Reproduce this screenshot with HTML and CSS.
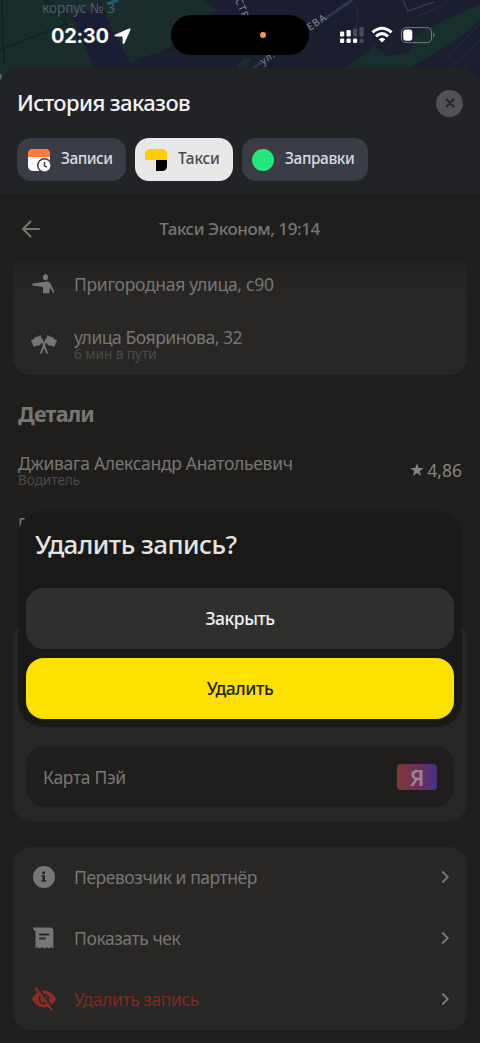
FILE: index.html
```html
<!DOCTYPE html>
<html lang="ru">
<head>
<meta charset="utf-8">
<meta name="viewport" content="width=device-width">
<title>История заказов</title>
<link rel="stylesheet" href="styles.css">
</head>
<body>
<div class="screen">
  <svg class="map" width="480" height="110" viewBox="0 0 480 110">
    <rect width="480" height="110" fill="#1a1e30"/>
    <path d="M0 0H48L56 12 72 17 95 68H128L100 0H204L216 10 186 35 162 52 176 68V90H0Z" fill="#182d2c"/>
    <path d="M48 0H100L84 14 72 17Z" fill="#182d2c"/>
    <path d="M72 17L100 5 130 64 150 56 165 53 178 70H95Z" fill="#1a1e35"/>
    <path d="M98 4L113 0 128 56 172 38 202 0H106Z" fill="#182d2c"/>
    <path d="M345 68L369 52 373 44 386 56 410 52 416 34 445 20 480 4V20L465 34 440 50 410 68Z" fill="#17302e"/>
    <path d="M236 68L244 56 251 60 246 68Z" fill="#17302e"/>
    <g fill="none" stroke="#111d22">
      <path d="M2 0L4 64M0 50L66 24M66 24L45 0M66 24L62 12M136 60L182 46M66 24L82 40"/>
    </g>
    <path d="M350 0C363 14 357 23 354 32M410 20L436 8 450 0M450 68L480 40M464 68L480 52M445 60L480 24" fill="none" stroke="#252c40"/>
    <path d="M403 0L408 11 434 2" fill="none" stroke="#393b36" stroke-width="1.5"/>
    <path d="M248 72L262 62M322 21L352 0" stroke="#2d3554" stroke-width="3"/>
    <path d="M107 4L118 0" stroke="#176079" stroke-width="3"/>
    <text class="map-label" x="42" y="13">корпус № 3</text>
    <text class="map-street" transform="translate(235 0) rotate(68)">СТР.</text>
    <text class="map-street" transform="translate(263 65) rotate(-34)">ул.</text>
    <text class="map-street" transform="translate(310 31) rotate(-35)">ЕВА</text>
    <text class="map-street" x="-4" y="80">ол</text>
  </svg>

  <header class="status">
    <div class="clock">02:30
      <svg width="17" height="17" viewBox="0 0 17 17"><path d="M1 6.800L15 .6Q17 .1 16.400 2L10.500 15.300Q9.300 17 8.600 15V9.200Q8.600 8.500 7.900 8.500H1.800Q-.6 8 1 6.800Z" fill="#fff"/></svg>
    </div>
    <div class="island"><i class="mic"></i></div>
    <svg class="indicators" width="98" height="18" viewBox="0 0 98 18">
      <g fill="#fff"><rect x="1" y="5.500" width="4.200" height="5" rx="1.300"/><rect x="7.500" y="4" width="4.200" height="6.500" rx="1.300"/><rect x="1" y="12.500" width="4.200" height="4.500" rx="1.300"/><rect x="7.500" y="12.500" width="4.200" height="4.500" rx="1.300"/><rect x="14" y="12.500" width="4.200" height="4.500" rx="1.300"/></g>
      <g fill="#494b57"><rect x="14" y="2.500" width="4.200" height="8" rx="1.300"/><rect x="20.500" y="1" width="4.200" height="9.500" rx="1.300"/><rect x="20.500" y="12.500" width="4.200" height="4.500" rx="1.300"/></g>
      <g fill="none" stroke="#fff" stroke-width="3"><path d="M33.500 6.400Q43 -2 52.500 6.400M37 10.300Q43 5 49 10.300"/></g>
      <path d="M43 16.500L39.700 13.300Q43 10.300 46.300 13.300Z" fill="#fff"/>
      <rect x="62.500" y="1.600" width="30" height="15" rx="4.500" fill="none" stroke="#787b83"/>
      <rect x="64.300" y="3.400" width="9" height="11.400" rx="2.800" fill="#fff"/>
      <path d="M94.200 6.500Q97 9 94.200 11.500Z" fill="#787b83"/>
    </svg>
  </header>

  <main class="sheet">
    <div class="top">
      <div class="heading">
        <h1>История заказов</h1>
        <span class="close"><svg width="12" height="12" viewBox="0 0 12 12"><path d="M2.500 2.500L9.500 9.500M9.500 2.500L2.500 9.500" stroke="#242528" stroke-width="2" stroke-linecap="round"/></svg></span>
      </div>
      <nav class="tabs">
        <div class="tab tab-records">
          <svg width="24" height="24" viewBox="0 0 24 24"><rect width="22" height="22" rx="5" fill="#fafafa"/><path d="M0 8V5Q0 0 5 0H17Q22 0 22 5V8Z" fill="#ff7a38"/><circle cx="16.500" cy="16.500" r="7.500" fill="#3a3d46"/><circle cx="16.500" cy="16.500" r="5.900" fill="#fafafa"/><path d="M16.500 13V16.900L19 18.200" fill="none" stroke="#3a3d46" stroke-width="1.500"/></svg>
          <span>Записи</span>
        </div>
        <div class="tab tab-taxi active">
          <svg width="24" height="24" viewBox="0 0 24 24"><path d="M0 11V6Q0 0 6 0H17Q22 0 22 5V11Z" fill="#fc0"/><path d="M11 11H22V17Q22 22 17 22H11Z" fill="#000"/></svg>
          <span>Такси</span>
        </div>
        <div class="tab tab-fuel">
          <svg width="24" height="24" viewBox="0 0 24 24"><circle cx="11" cy="11" r="11" fill="#25e67b"/></svg>
          <span>Заправки</span>
        </div>
      </nav>
    </div>

    <div class="titlebar">
      <svg class="back" width="20" height="18" viewBox="0 0 20 18"><path d="M8.500 1.500L1 9 8.500 16.500M1.200 9H17" fill="none" stroke="#777674" stroke-width="2" stroke-linecap="round" stroke-linejoin="round"/></svg>
      <span class="ride">Такси Эконом, 19:14</span>
    </div>

    <section class="card route">
      <div class="row">
        <span class="icon"><svg width="26" height="24" viewBox="0 0 26 24"><g fill="#777674"><ellipse cx="14.500" cy="5.300" rx="2.600" ry="3"/><path d="M1.500 11.400L16 9.600Q18.500 9.600 19.700 12L23.500 20 22.200 20.800 19 15.500 18.400 21.200H12L12 15 2 13.500Q.6 12.400 1.500 11.400Z"/></g></svg></span>
        <span class="t-from">Пригородная улица, с90</span>
      </div>
      <div class="row">
        <span class="icon"><svg width="28" height="24" viewBox="0 0 28 24"><g fill="#777674"><path d="M1 7.500Q4 6.500 5.500 4Q8 4 10.500 2L13 9.500Q10.500 10 9.500 12.500Q6.500 12 3.700 14Z"/><path d="M27 7.500Q24 6.500 22.500 4Q20 4 17.500 2L15 9.500Q17.500 10 18.500 12.500Q21.500 12 24.300 14Z"/></g><path d="M11.500 6L17.300 20.500M16.500 6L10.700 20.500" stroke="#777674" stroke-width="1.900"/></svg></span>
        <span class="stack"><span class="t-to">улица Бояринова, 32</span><small class="t-time">6 мин в пути</small></span>
      </div>
    </section>

    <section class="details">
      <h2>Детали</h2>
      <div class="detail">
        <span class="stack"><span class="t-driver">Дживага Александр Анатольевич</span><small class="t-role">Водитель</small></span>
        <span class="rating"><svg width="14" height="14" viewBox="0 0 14 14"><path d="M7 .3L8.700 5H13.700L9.700 8.100 11.100 13 7 10.100 2.900 13 4.300 8.100 .3 5H5.300Z" fill="#858481"/></svg><span class="t-rate">4,86</span></span>
      </div>
      <div class="detail car">Г</div>
    </section>

    <section class="card payment">
      <div class="method"><span class="t-pay">Карта Пэй</span><span class="pay-logo">Я</span></div>
    </section>

    <section class="card menu">
      <div class="row">
        <span class="icon"><svg width="22" height="22" viewBox="0 0 22 22"><circle cx="11" cy="11" r="11" fill="#777674"/><circle cx="10.700" cy="6.700" r="1.500" fill="#252422"/><path d="M8.200 9.200H12V14.300H13.300V15.700H8.200V14.300H9.500V10.500H8.200Z" fill="#252422"/></svg></span>
        <span class="label t-carrier">Перевозчик и партнёр</span>
        <svg class="chevron" width="8" height="14" viewBox="0 0 8 14"><path d="M1.300 1.500L6.700 7 1.300 12.500" fill="none" stroke="#7b7a78" stroke-width="1.800"/></svg>
      </div>
      <div class="row">
        <span class="icon"><svg width="22" height="22" viewBox="0 0 22 22"><path d="M0 .5H17Q20.300 .5 20.300 4V21.500L18.300 20Q16 22.500 14 20Q11.500 22.500 9 20Q6.500 22.500 4.500 20L2.500 21.500V4Q0 3.500 0 .5Z" fill="#777674"/><path d="M7 7.500H15.500M7 11.500H12" stroke="#282725" stroke-width="1.900" stroke-linecap="round"/></svg></span>
        <span class="label t-check">Показать чек</span>
        <svg class="chevron" width="8" height="14" viewBox="0 0 8 14"><path d="M1.300 1.500L6.700 7 1.300 12.500" fill="none" stroke="#7b7a78" stroke-width="1.800"/></svg>
      </div>
      <div class="row danger">
        <span class="icon"><svg width="26" height="24" viewBox="0 0 26 24"><path d="M1 12C3 7 8 3.500 13 3.500S23 7 25 12C23 17 18 20.500 13 20.500S3 17 1 12Z" fill="#8b2c22"/><circle cx="13" cy="12" r="5.300" fill="#282725"/><circle cx="13" cy="12" r="3.600" fill="#8b2c22"/><path d="M6.800 0L22.500 22" stroke="#282725" stroke-width="1.800"/><path d="M5 1.500L20.500 22.500" stroke="#8b2c22" stroke-width="2.200" stroke-linecap="round"/></svg></span>
        <span class="label t-delete">Удалить запись</span>
        <svg class="chevron" width="8" height="14" viewBox="0 0 8 14"><path d="M1.300 1.500L6.700 7 1.300 12.500" fill="none" stroke="#7b7a78" stroke-width="1.800"/></svg>
      </div>
    </section>
  </main>

  <div class="dialog" role="dialog">
    <h3>Удалить запись?</h3>
    <button class="btn dismiss"><span>Закрыть</span></button>
    <button class="btn confirm"><span>Удалить</span></button>
  </div>
</div>
</body>
</html>
```
FILE: styles.css
```css
* { box-sizing: border-box; }
body { margin: 0; background: #1f1e1c; }
.screen { position: relative; width: 480px; height: 1043px; overflow: hidden; font-family: "Noto Sans", sans-serif; color: #777674; font-size: 17.5px; line-height: 22px; white-space: nowrap; }
h1, h2, h3 { margin: 0; }
svg { display: block; flex: none; }
.map { position: absolute; top: 0; left: 0; }
.map-label { fill: #555d62; font-size: 13.5px; }
.map-street { fill: #858b98; font-size: 10px; letter-spacing: 1px; }

.status { position: relative; height: 68px; display: flex; align-items: center; padding: 2px 43px 0 51px; }
.clock { width: 120px; display: flex; align-items: center; gap: 5px; padding-top: 2px; color: #fff; font: 700 20px/24px Inter, sans-serif; letter-spacing: -.3px; }
.island { width: 138px; height: 40px; border-radius: 20px; background: #000; display: flex; align-items: center; padding-left: 89px; }
.mic { width: 6px; height: 6px; border-radius: 50%; background: #f6963c; }
.indicators { margin-left: auto; }

.sheet { position: relative; height: 975px; border-radius: 18px 18px 0 0; overflow: hidden; background: #1f1e1c; }
.top { height: 126px; padding: 18px 17px 0 17px; background: #222327; }
.heading { height: 34px; display: flex; align-items: center; justify-content: space-between; }
h1 { padding-bottom: 2px; font-size: 22px; font-weight: 500; color: #f2f2f2; letter-spacing: -.6px; }
.close { width: 27px; height: 27px; border-radius: 50%; background: #515254; display: flex; align-items: center; justify-content: center; }
.tabs { display: flex; gap: 9px; margin-top: 18px; }
.tab { height: 43px; border-radius: 14px; background: #3a3d46; color: #d9dadd; font-size: 15.4px; font-weight: 500; display: flex; align-items: center; gap: 9px; padding-left: 10px; }
.tab svg { margin-top: 2px; }
.tab span { padding-bottom: 2px; }
.tab-records { width: 109px; padding-left: 11px; letter-spacing: -.5px; }
.tab-taxi { width: 98px; letter-spacing: -.2px; }
.tab-fuel { width: 126px; letter-spacing: -.4px; }
.tab.active { background: #e8e8e8; color: #4b4b4b; }

.titlebar { position: relative; z-index: 1; height: 68px; padding: 2px 22px 0; display: flex; align-items: center; background: #1f1e1c; }
.ride { flex: 1; margin-right: 21px; text-align: center; font-weight: 500; font-size: 17px; letter-spacing: -.43px; }
.card { margin: 0 13px; border-radius: 18px; background: #282725; overflow: hidden; }
.row { height: 61px; display: flex; align-items: center; padding-right: 18px; }
.icon { width: 61px; display: flex; justify-content: center; }
.label { flex: 1; padding-bottom: 2px; }
.stack { display: flex; flex-direction: column; padding-bottom: 1px; }
small { font-size: 13.5px; line-height: 14px; color: #4c4b49; }
.stack > span { line-height: 20px; }
.route { margin-top: -9px; background: linear-gradient(#22211f 6px, #282725 44px); }
.t-from { letter-spacing: -.3px; }
.t-to { letter-spacing: -.45px; }
.t-driver { letter-spacing: -.31px; }
.t-carrier { letter-spacing: -.45px; }
.t-check, .t-delete { letter-spacing: -.42px; }
.menu .icon, .chevron { margin-bottom: 1px; }

.details { padding: 25px 18px 0; height: 247px; }
h2 { height: 40px; font-size: 21.5px; line-height: 28px; font-weight: 700; letter-spacing: -.75px; }
.detail { height: 61px; display: flex; align-items: center; justify-content: space-between; border-bottom: 1px solid #222120; }
.car { border: 0; padding-bottom: 15px; }
.rating { display: flex; align-items: center; gap: 3px; color: #858481; }

.payment { height: 199px; padding: 125px 13px 0; }
.method { height: 60px; border-radius: 18px; background: #1f1e1c; display: flex; align-items: center; justify-content: space-between; padding: 0 17px; }
.t-pay { padding-bottom: 1px; letter-spacing: -.33px; }
.pay-logo { width: 40px; height: 26px; border-radius: 4px; background: linear-gradient(90deg, #7d3836, #723058 50%, #463083); color: #928693; font-size: 22px; font-weight: 600; line-height: 26px; text-align: center; }
.menu { margin-top: 26px; }
.danger { color: #7c2c23; }

.dialog { position: absolute; left: 18px; top: 511px; width: 444px; height: 216px; border-radius: 25px; background: #191917; padding: 14px 8px 8px; display: flex; flex-direction: column; gap: 9px; }
h3 { height: 54px; padding-left: 9px; font-size: 26px; line-height: 38px; font-weight: 500; letter-spacing: -.55px; color: #e4e4e2; }
.btn { height: 61px; flex: none; border: 0; border-radius: 18px; padding: 0 0 2px; font: 500 17.5px/22px "Noto Sans", sans-serif; letter-spacing: -.47px; }
.dismiss { background: #2f2f2d; color: #eee; }
.confirm { background: #fde100; color: #21201a; }
```
